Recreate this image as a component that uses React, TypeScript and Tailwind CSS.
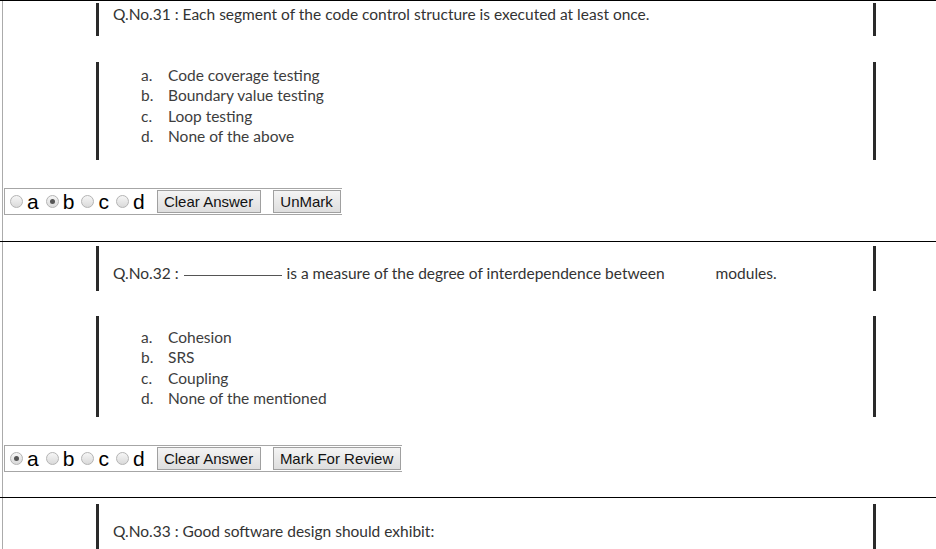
import React from 'react';

interface Question {
  no: number;
  text: React.ReactNode;
  options?: string[];
  answer?: string;
  reviewLabel?: string;
  reviewWidth?: string;
}

const questions: Question[] = [
  {
    no: 31,
    text: 'Each segment of the code control structure is executed at least once.',
    options: ['Code coverage testing', 'Boundary value testing', 'Loop testing', 'None of the above'],
    answer: 'b',
    reviewLabel: 'UnMark',
    reviewWidth: 'w-[68px]',
  },
  {
    no: 32,
    text: (
      <>
        <span className="inline-block w-[98px] border-b border-[#555] ml-[1px] mr-[5px] translate-y-[-3px]" />
        is a measure of the degree of interdependence between
        <span className="ml-[51px]">modules.</span>
      </>
    ),
    options: ['Cohesion', 'SRS', 'Coupling', 'None of the mentioned'],
    answer: 'a',
    reviewLabel: 'Mark For Review',
    reviewWidth: 'w-[128px]',
  },
  {
    no: 33,
    text: 'Good software design should exhibit:',
  },
];

function Bar() {
  return <div className="w-[3px] bg-[#2a2a2a]" />;
}

function Radio({ checked }: { checked?: boolean }) {
  return (
    <span className="w-[13px] h-[13px] rounded-full border border-[#b4b4b4] bg-linear-to-b from-[#f6f6f6] to-[#dadada] flex items-center justify-center">
      {checked && <span className="w-[5px] h-[5px] rounded-full bg-[#555]" />}
    </span>
  );
}

function Controls({ q }: { q: Question }) {
  return (
    <div className="ml-[1px] flex items-center h-[27px] border-y border-l border-[#a6a6a6] pl-[5px] pr-[1px] w-fit font-['Liberation_Sans',Arial,sans-serif]">
      {['a', 'b', 'c', 'd'].map((l, i) => (
        <span key={l} className={`flex items-center ${i > 0 ? 'ml-[7px]' : ''}`}>
          <Radio checked={q.answer === l} />
          <span className="ml-[4px] text-[21px] leading-[22px] text-black">{l}</span>
        </span>
      ))}
      <button className="ml-[12px] h-[23px] w-[104px] border border-[#a0a0a0] bg-linear-to-b from-[#f4f4f4] to-[#dedede] text-[15px] text-[#111]">
        Clear Answer
      </button>
      <button className={`ml-[12px] h-[23px] ${q.reviewWidth} border border-[#a0a0a0] bg-linear-to-b from-[#f4f4f4] to-[#dedede] text-[15px] text-[#111]`}>
        {q.reviewLabel}
      </button>
    </div>
  );
}

function Block({
  q,
  headTop,
  headH,
  textTop,
  optTop,
  optH,
  optPad,
  ctrlTop,
  ctrlBottom,
}: {
  q: Question;
  headTop: number;
  headH: number;
  textTop: number;
  optTop?: number;
  optH?: number;
  optPad?: number;
  ctrlTop?: number;
  ctrlBottom?: number;
}) {
  return (
    <section className="border-t border-black">
      <div className="ml-[2px] border-l border-[#ababab]">
        <div className="ml-[93px] w-[780px] font-['Lato',sans-serif] text-[#333]">
          {/* question header, framed by the two dark bars */}
          <div className="flex justify-between" style={{ paddingTop: headTop, height: headTop + headH }}>
            <Bar />
            <div className="flex-1 pl-[14px] text-[15.5px] leading-[18px]" style={{ marginTop: textTop }}>
              Q.No.{q.no} : {q.text}
            </div>
            <Bar />
          </div>
          {q.options && (
            <div className="flex justify-between" style={{ marginTop: optTop, height: optH }}>
              <Bar />
              <ol className="flex-1 pl-[42px] text-[15.5px] leading-[20.4px] text-[#3d3d3d]" style={{ paddingTop: optPad }}>
                {q.options.map((o, i) => (
                  <li key={o} className="flex">
                    <span className="w-[27px]">{'abcd'[i]}.</span>
                    <span>{o}</span>
                  </li>
                ))}
              </ol>
              <Bar />
            </div>
          )}
        </div>
        {q.options && (
          <div style={{ paddingTop: ctrlTop, paddingBottom: ctrlBottom }}>
            <Controls q={q} />
          </div>
        )}
      </div>
    </section>
  );
}

export default function App() {
  return (
    <div className="w-[936px] h-[549px] overflow-hidden bg-white">
      <Block q={questions[0]} headTop={2} headH={33} textTop={2} optTop={26} optH={98} optPad={3} ctrlTop={28} ctrlBottom={26} />
      <Block q={questions[1]} headTop={4} headH={45} textTop={18} optTop={25} optH={101} optPad={11} ctrlTop={28} ctrlBottom={25} />
      <Block q={questions[2]} headTop={6} headH={60} textTop={18} />
    </div>
  );
}
